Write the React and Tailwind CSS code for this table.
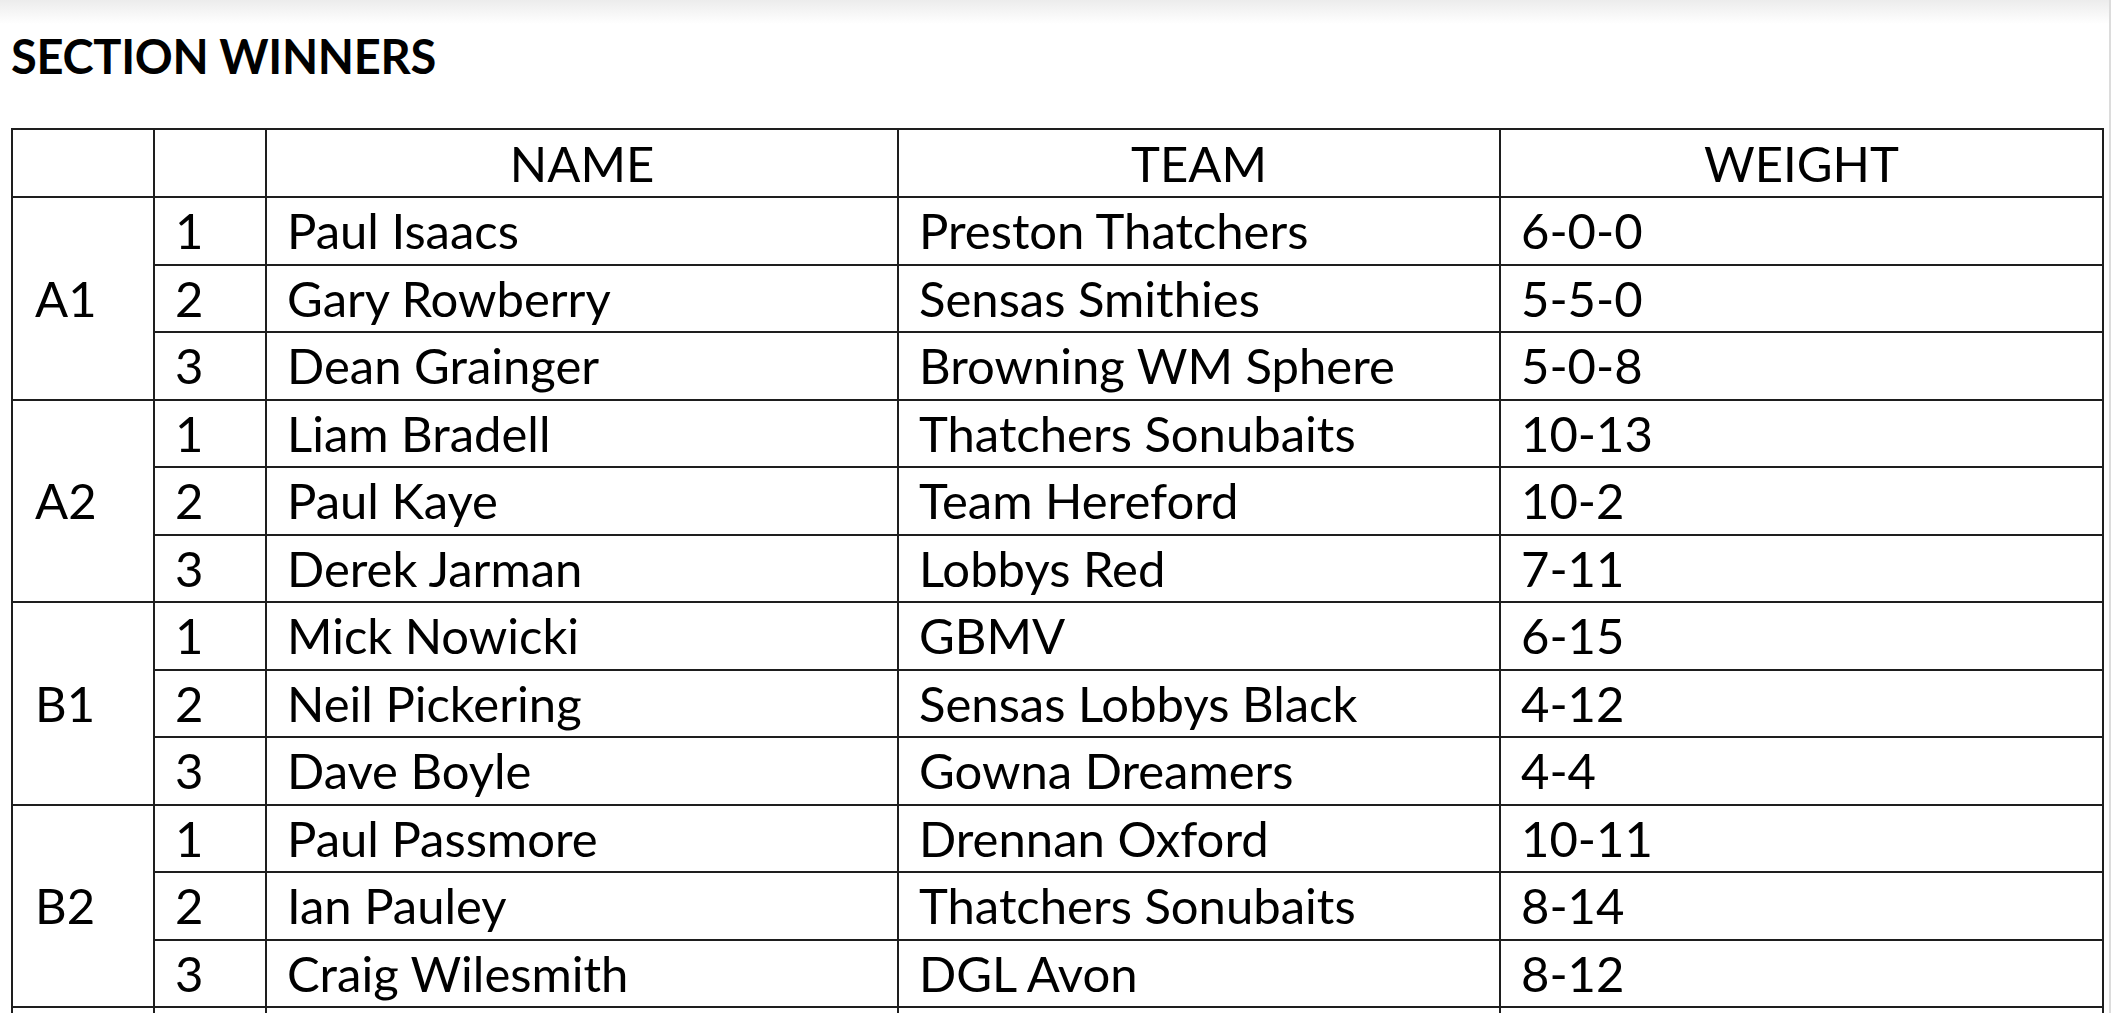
import React from 'react';

// Section winners, grouped by section (rowspan on the first column)
const SECTIONS = [
  {
    name: 'A1',
    rows: [
      ['1', 'Paul Isaacs', 'Preston Thatchers', '6-0-0'],
      ['2', 'Gary Rowberry', 'Sensas Smithies', '5-5-0'],
      ['3', 'Dean Grainger', 'Browning WM Sphere', '5-0-8'],
    ],
  },
  {
    name: 'A2',
    rows: [
      ['1', 'Liam Bradell', 'Thatchers Sonubaits', '10-13'],
      ['2', 'Paul Kaye', 'Team Hereford', '10-2'],
      ['3', 'Derek Jarman', 'Lobbys Red', '7-11'],
    ],
  },
  {
    name: 'B1',
    rows: [
      ['1', 'Mick Nowicki', 'GBMV', '6-15'],
      ['2', 'Neil Pickering', 'Sensas Lobbys Black', '4-12'],
      ['3', 'Dave Boyle', 'Gowna Dreamers', '4-4'],
    ],
  },
  {
    name: 'B2',
    rows: [
      ['1', 'Paul Passmore', 'Drennan Oxford', '10-11'],
      ['2', 'Ian Pauley', 'Thatchers Sonubaits', '8-14'],
      ['3', 'Craig Wilesmith', 'DGL Avon', '8-12'],
    ],
  },
];

const cell = 'border-2 border-[#1e1e1e] align-middle pl-5 text-left';

const App = () => {
  return (
    <div className="h-[1013px] w-[2123px] overflow-hidden bg-white text-black font-['Lato','Liberation_Sans',sans-serif]">
      <div className="h-full w-[2111px] border-r-2 border-[#dcdcdc]">
        {/* soft shadow along the top edge */}
        <div className="h-[24px] bg-gradient-to-b from-[#ececec] to-white" />

        <h1 className="mt-[9px] pl-[11px] text-[47px] leading-none font-bold tracking-[-0.3px]">
          SECTION WINNERS
        </h1>

        <table className="mt-[48px] ml-[11px] w-[2091px] table-fixed border-collapse text-[49px] leading-none">
          <colgroup>
            <col className="w-[142px]" />
            <col className="w-[112px]" />
            <col className="w-[632px]" />
            <col className="w-[602px]" />
            <col className="w-[603px]" />
          </colgroup>
          <thead>
            <tr className="h-[68px]">
              <th className={cell} />
              <th className={cell} />
              <th className="border-2 border-[#1e1e1e] align-middle font-normal text-center">NAME</th>
              <th className="border-2 border-[#1e1e1e] align-middle font-normal text-center">TEAM</th>
              <th className="border-2 border-[#1e1e1e] align-middle font-normal text-center">WEIGHT</th>
            </tr>
          </thead>
          <tbody>
            {SECTIONS.map((s) =>
              s.rows.map((r, i) => (
                <tr key={s.name + r[0]} className="h-[67.5px]">
                  {i === 0 && (
                    <td rowSpan={3} className="border-2 border-[#1e1e1e] align-middle pl-[22px] text-left">
                      {s.name}
                    </td>
                  )}
                  <td className={cell}>{r[0]}</td>
                  <td className={cell}>{r[1]}</td>
                  <td className={cell}>{r[2]}</td>
                  <td className={cell}>{r[3]}</td>
                </tr>
              ))
            )}
            <tr className="h-[67.5px]">
              <td className={cell} />
              <td className={cell} />
              <td className={cell} />
              <td className={cell} />
              <td className={cell} />
            </tr>
          </tbody>
        </table>
      </div>
    </div>
  );
};

export default App;
